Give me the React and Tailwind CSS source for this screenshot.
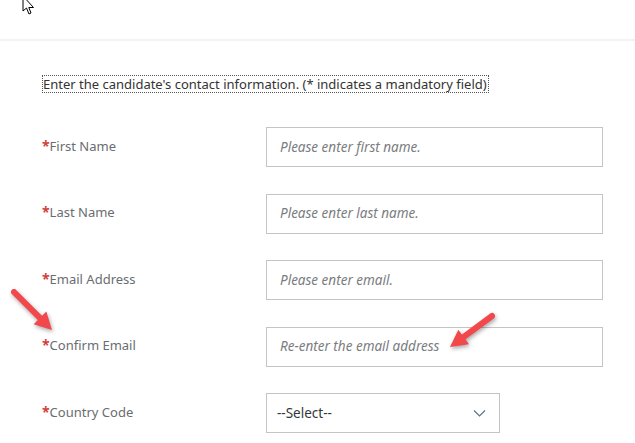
import React from 'react';

const fields = [
  { label: 'First Name', placeholder: 'Please enter first name.' },
  { label: 'Last Name', placeholder: 'Please enter last name.' },
  { label: 'Email Address', placeholder: 'Please enter email.' },
  { label: 'Confirm Email', placeholder: 'Re-enter the email address' },
];

function Arrow({ x1, y1, x2, y2 }) {
  const dx = x2 - x1;
  const dy = y2 - y1;
  const len = Math.hypot(dx, dy);
  const ux = dx / len;
  const uy = dy / len;
  const hl = 17;
  const hw = 9;
  const bx = x2 - ux * hl;
  const by = y2 - uy * hl;
  const px = -uy;
  const py = ux;
  const head = `${x2},${y2} ${bx + px * hw},${by + py * hw} ${bx - px * hw},${by - py * hw}`;
  return (
    <g>
      <line x1={x1} y1={y1} x2={bx + ux * 2} y2={by + uy * 2} stroke="#f2484b" strokeWidth="6" strokeLinecap="round" />
      <polygon points={head} fill="#f2484b" />
    </g>
  );
}

export default function App() {
  return (
    <div className="relative w-[635px] h-[443px] overflow-hidden bg-white font-['Noto_Sans','Open_Sans',sans-serif]">
      {/* top bar */}
      <div className="h-[41px] border-b-2 border-[#f3f3f3]" />

      <div className="pl-[42px] pt-[30px]">
        <div className="inline-block border border-dotted border-[#555] leading-[16px] text-[13px] text-[#333] pr-[1px]">
          Enter the candidate's contact information. (* indicates a mandatory field)
        </div>

        <div className="mt-[32px] flex flex-col gap-[26.5px]">
          {fields.map((f) => (
            <div key={f.label} className="flex items-center h-[40px]">
              <div className="w-[224px] text-[13px] text-[#6a6d70] leading-[16px] -mt-[3px]">
                <span className="text-[#d0403a] font-bold text-[14px]">*</span>
                {f.label}
              </div>
              <div className="w-[337px] h-[40px] border border-[#c4c4c4] flex items-center px-[13px]">
                <span className="italic text-[13.5px] text-[#7a7d80]">{f.placeholder}</span>
              </div>
            </div>
          ))}
          <div className="flex items-center h-[40px]">
            <div className="w-[224px] text-[13px] text-[#6a6d70] leading-[16px] -mt-[3px]">
              <span className="text-[#d0403a] font-bold text-[14px]">*</span>
              Country Code
            </div>
            <div className="w-[234px] h-[40px] border border-[#c4c4c4] flex items-center justify-between pl-[10px] pr-[13px]">
              <span className="text-[13.5px] text-[#32363a]">--Select--</span>
              <svg width="13" height="8" viewBox="0 0 13 8" fill="none">
                <path d="M1 1.5l5.5 5.5 5.5-5.5" stroke="#5b738b" strokeWidth="1.2" />
              </svg>
            </div>
          </div>
        </div>
      </div>

      {/* mouse cursor */}
      <svg className="absolute left-[22px] top-0" width="16" height="18" viewBox="0 0 16 18">
        <path d="M1 -4 L1 11 L4.5 8 L7 14 L9 13 L6.8 7.5 L11.5 7.5 Z" fill="#fff" stroke="#000" strokeWidth="1" strokeLinejoin="round" />
      </svg>

      {/* annotation arrows */}
      <svg className="absolute inset-0 pointer-events-none" width="635" height="443" style={{ filter: 'drop-shadow(1px 2px 2px rgba(0,0,0,0.35))' }}>
        <Arrow x1={14} y1={292} x2={52} y2={330} />
        <Arrow x1={492} y1={316} x2={450} y2={347} />
      </svg>
    </div>
  );
}
